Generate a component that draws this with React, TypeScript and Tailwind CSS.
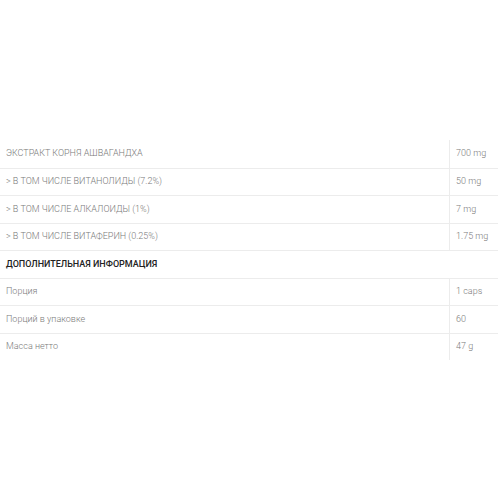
import React from "react";

interface Row {
  label: string;
  value: string;
}

const ingredients: Row[] = [
  { label: "ЭКСТРАКТ КОРНЯ АШВАГАНДХА", value: "700 mg" },
  { label: "> В ТОМ ЧИСЛЕ ВИТАНОЛИДЫ (7.2%)", value: "50 mg" },
  { label: "> В ТОМ ЧИСЛЕ АЛКАЛОИДЫ (1%)", value: "7 mg" },
  { label: "> В ТОМ ЧИСЛЕ ВИТАФЕРИН (0.25%)", value: "1.75 mg" },
];

const extra: Row[] = [
  { label: "Порция", value: "1 caps" },
  { label: "Порций в упаковке", value: "60" },
  { label: "Масса нетто", value: "47 g" },
];

function DataRow({ row, first }: { row: Row; first?: boolean }) {
  return (
    <div className={`flex h-[27.5px] ${first ? "" : "border-t border-[#ececec]"}`}>
      <div className="flex-1 flex items-center pl-[6px] text-[#7a7a7a]">{row.label}</div>
      <div className="w-[49px] flex items-center pl-[6px] border-l border-[#ececec] text-[#7a7a7a]">{row.value}</div>
    </div>
  );
}

export default function App() {
  return (
    <div className="w-[500px] h-[500px] bg-white pt-[140px] pr-[2px] text-[9px] font-light leading-none" style={{ fontFamily: "Roboto, 'Noto Sans', sans-serif" }}>
      <div className="flex flex-col">
        {ingredients.map((r, i) => (
          <DataRow key={r.label} row={r} first={i === 0} />
        ))}
        <div className="flex h-[27.5px] items-center pl-[6px] border-t border-[#ececec] font-medium text-[#222]">
          ДОПОЛНИТЕЛЬНАЯ ИНФОРМАЦИЯ
        </div>
        {extra.map((r) => (
          <DataRow key={r.label} row={r} />
        ))}
      </div>
    </div>
  );
}
